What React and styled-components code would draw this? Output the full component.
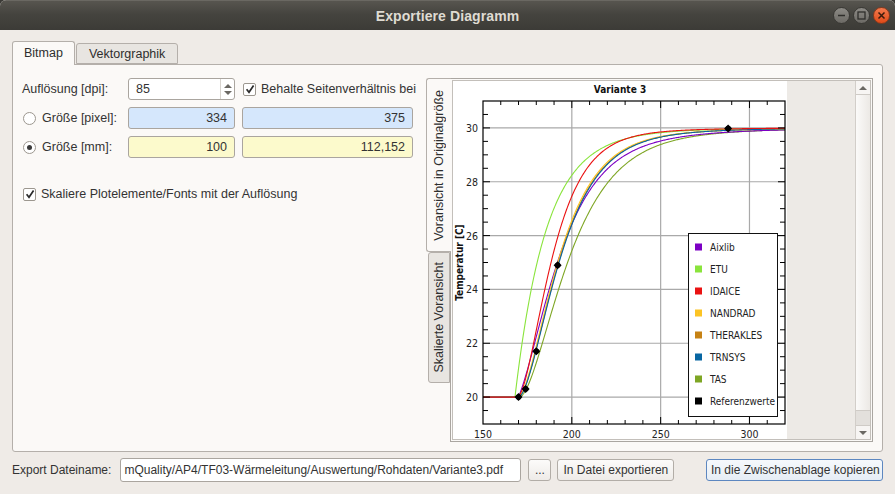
import React from 'react';
import styled, { createGlobalStyle, css } from 'styled-components';

const GlobalStyle = createGlobalStyle`
  html, body {
    margin: 0;
    padding: 0;
    background: #3b3a36;
  }
  body {
    font-family: "Liberation Sans", Arial, sans-serif;
    font-size: 12px;
    color: #333;
  }
  * { box-sizing: border-box; }
`;

// ---- chart data ----
const T_MIN = 150;
const T_MAX = 320;
const V_MIN = 19;
const V_MAX = 31;
const PL = 30;
const PR = 332;
const PT = 20;
const PB = 343;

const sx = (t) => PL + ((t - T_MIN) * (PR - PL)) / (T_MAX - T_MIN);
const sy = (v) => PT + ((V_MAX - v) * (PB - PT)) / (V_MAX - V_MIN);

const shapes = {
  first: (x) => 1 - Math.exp(-x),
  second: (x) => 1 - (1 + x) * Math.exp(-x),
  soft: (x) => 1 - (1 + 0.8 * x) * Math.exp(-x),
};

// w / tail: share and time constant of the slow part of the response
const series = [
  { name: 'Aixlib', color: '#7c00c4', t0: 170, tau: 14, shape: 'soft', w: 0.2, tail: 45 },
  { name: 'ETU', color: '#8ae43c', t0: 168, tau: 17, shape: 'first', w: 0.08, tail: 40 },
  { name: 'IDAICE', color: '#ea1212', t0: 169.5, tau: 11, shape: 'second', w: 0.1, tail: 35 },
  { name: 'NANDRAD', color: '#fcc424', t0: 170, tau: 12.8, shape: 'second', w: 0.15, tail: 40 },
  { name: 'THERAKLES', color: '#c68214', t0: 170.2, tau: 13, shape: 'second', w: 0.15, tail: 40 },
  { name: 'TRNSYS', color: '#0866a2', t0: 170.3, tau: 13.1, shape: 'second', w: 0.15, tail: 40 },
  { name: 'TAS', color: '#7ea624', t0: 171, tau: 15.5, shape: 'second', w: 0.18, tail: 45 },
];

const drawOrder = ['TAS', 'ETU', 'Aixlib', 'THERAKLES', 'NANDRAD', 'TRNSYS', 'IDAICE'];

const refPoints = [
  [170, 20],
  [174, 20.3],
  [180, 21.7],
  [192, 24.9],
  [288, 29.98],
];

function curvePath(s) {
  const f = shapes[s.shape];
  const pts = [];
  for (let t = T_MIN; t <= T_MAX; t += 0.5) {
    const d = t - s.t0;
    const v = d <= 0 ? 20 : 20 + 10 * ((1 - s.w) * f(d / s.tau) + s.w * (1 - Math.exp(-d / s.tail)));
    pts.push(`${sx(t).toFixed(2)},${sy(v).toFixed(2)}`);
  }
  return 'M' + pts.join('L');
}

const range = (a, b, step) => {
  const out = [];
  for (let v = a; v <= b + 1e-9; v += step) out.push(Math.round(v * 100) / 100);
  return out;
};

const Chart = () => {
  const xTicks = range(160, 310, 10);
  const yTicks = range(19.5, 30.5, 0.5);
  const fontNarrow = '"Liberation Sans Narrow", "DejaVu Sans Condensed", "Liberation Sans", sans-serif';

  return (
    <svg width="334" height="375" viewBox="0 0 334 375" style={{ display: 'block', background: '#fff', flex: 'none' }}>
      <defs>
        <clipPath id="plot">
          <rect x={PL} y={PT} width={PR - PL} height={PB - PT} />
        </clipPath>
      </defs>
      <text x="167" y="12" textAnchor="middle" fontFamily={fontNarrow} fontWeight="bold" fontSize="10" fill="#111">
        Variante 3
      </text>

      {/* grid */}
      {[200, 250, 300].map((t) => (
        <line key={'gx' + t} x1={sx(t)} x2={sx(t)} y1={PT} y2={PB} stroke="#a9a9a9" strokeWidth="1.2" />
      ))}
      {[20, 22, 24, 26, 28, 30].map((v) => (
        <line key={'gy' + v} x1={PL} x2={PR} y1={sy(v)} y2={sy(v)} stroke="#a9a9a9" strokeWidth="1.2" />
      ))}

      {/* curves */}
      <g clipPath="url(#plot)" fill="none" strokeWidth="1.1">
        {drawOrder.map((n) => {
          const s = series.find((x) => x.name === n);
          return <path key={n} d={curvePath(s)} stroke={s.color} />;
        })}
        {refPoints.map(([t, v]) => (
          <g key={t} transform={`translate(${sx(t)},${sy(v)})`}>
            <polygon points="0,-4 4,0 0,4 -4,0" fill="#000" />
            <circle r="2.8" fill="#000" />
          </g>
        ))}
      </g>

      {/* ticks */}
      <g stroke="#000" strokeWidth="1">
        {xTicks.map((t) => {
          const major = t % 50 === 0;
          const len = major ? 7 : 4;
          return (
            <g key={'xt' + t}>
              <line x1={sx(t)} x2={sx(t)} y1={PB} y2={PB - len} />
              <line x1={sx(t)} x2={sx(t)} y1={PT} y2={PT + len} />
            </g>
          );
        })}
        {yTicks.map((v) => {
          const major = v % 2 === 0;
          const len = major ? 7 : 5;
          return (
            <g key={'yt' + v}>
              <line x1={PL} x2={PL + len} y1={sy(v)} y2={sy(v)} />
              <line x1={PR} x2={PR - len} y1={sy(v)} y2={sy(v)} />
            </g>
          );
        })}
      </g>
      <rect x={PL} y={PT} width={PR - PL} height={PB - PT} fill="none" stroke="#000" strokeWidth="1.2" />

      {/* tick labels */}
      <g fontFamily={fontNarrow} fontSize="10.5" fill="#222">
        {[20, 22, 24, 26, 28, 30].map((v) => (
          <text key={'yl' + v} x="25" y={sy(v) + 4} textAnchor="end">
            {v}
          </text>
        ))}
        {[150, 200, 250, 300].map((t) => (
          <text key={'xl' + t} x={sx(t)} y="357" textAnchor="middle">
            {t}
          </text>
        ))}
      </g>
      <text
        transform={`translate(10,${(PT + PB) / 2}) rotate(-90)`}
        textAnchor="middle"
        fontFamily={fontNarrow}
        fontWeight="bold"
        fontSize="10"
        fill="#111"
      >
        Temperatur [C]
      </text>

      {/* legend */}
      <rect x="235.5" y="152.5" width="89" height="183" fill="#fff" stroke="#111" strokeWidth="1" />
      {[...series, { name: 'Referenzwerte', color: '#000' }].map((s, i) => (
        <g key={s.name} transform={`translate(0,${166 + i * 22})`}>
          <rect x="242" y="-3.5" width="7" height="7" fill={s.color} />
          <text x="257" y="4" fontFamily={fontNarrow} fontSize="10" fill="#222">
            {s.name}
          </text>
        </g>
      ))}
    </svg>
  );
};

// ---- small drawings ----
const CheckMark = () => (
  <svg width="10" height="10" viewBox="0 0 10 10">
    <path d="M1.6 5.2 L4 8.2 L8.6 1.4" fill="none" stroke="#2b2b2b" strokeWidth="1.7" />
  </svg>
);

// ---- window ----
const Window = styled.div`
  width: 895px;
  height: 494px;
  display: flex;
  flex-direction: column;
  background: #efebe7;
  border-radius: 6px 6px 0 0;
  overflow: hidden;
`;

const TitleBar = styled.div`
  height: 30px;
  flex: none;
  display: grid;
  grid-template-columns: 1fr auto 1fr;
  align-items: center;
  background: linear-gradient(#57554f, #45443f 45%, #3c3b37);
  border-top: 1px solid #6a6862;
`;

const Title = styled.div`
  grid-column: 2;
  font-weight: bold;
  font-size: 14px;
  color: #dfdbd2;
  letter-spacing: 0.1px;
`;

const WinButtons = styled.div`
  grid-column: 3;
  justify-self: end;
  display: flex;
  gap: 3px;
  padding-right: 5px;
`;

const WinButton = styled.div`
  width: 17px;
  height: 17px;
  border-radius: 50%;
  display: flex;
  align-items: center;
  justify-content: center;
  border: 1px solid #3a3935;
  background: linear-gradient(#8c8a85, #6c6a65);
  ${(p) =>
    p.$close &&
    css`
      background: linear-gradient(#f47a4e, #df4a18);
      border-color: #8a3a1c;
    `}
`;

const Body = styled.div`
  flex: 1;
  display: flex;
  flex-direction: column;
  padding: 11px 12px 11px 12px;
`;

const TabBar = styled.div`
  display: flex;
  align-items: flex-end;
  height: 23px;
  position: relative;
  z-index: 1;
`;

const Tab = styled.div`
  height: ${(p) => (p.$active ? '24px' : '21px')};
  margin-bottom: ${(p) => (p.$active ? '-1px' : '0')};
  padding: 0 ${(p) => (p.$active ? '11px' : '12px')};
  display: flex;
  align-items: center;
  border: 1px solid #b4afaa;
  border-bottom: ${(p) => (p.$active ? 'none' : '1px solid #b4afaa')};
  border-radius: 3px 3px 0 0;
  background: ${(p) => (p.$active ? '#fbf9f7' : '#e8e5e1')};
  color: #2e2e2e;
  font-size: 12.5px;
  padding-bottom: ${(p) => (p.$active ? '1px' : '0')};
  margin-right: 1px;
`;

const TabPane = styled.div`
  height: 388px;
  flex: none;
  display: flex;
  gap: 13px;
  padding: 13px 9px 9px 9px;
  border: 1px solid #b4afaa;
  background: #fbf9f7;
  border-radius: 0 3px 3px 3px;
`;

const FormColumn = styled.div`
  width: 391px;
  flex: none;
  display: flex;
  flex-direction: column;
`;

const FormGrid = styled.div`
  display: grid;
  grid-template-columns: 99px 107px 171px;
  grid-auto-rows: 22px;
  column-gap: 7px;
  row-gap: 7px;
  align-items: center;
`;

const Label = styled.label`
  display: flex;
  align-items: center;
  gap: ${(p) => (p.$gap ? p.$gap : 6)}px;
  font-size: ${(p) => p.$size || 12.5}px;
  color: #333;
  white-space: nowrap;
  padding-left: ${(p) => p.$indent || 0}px;
`;

const Box = styled.span`
  width: 13px;
  height: 13px;
  flex: none;
  display: flex;
  align-items: center;
  justify-content: center;
  border: 1px solid #9c978f;
  background: #fff;
  border-radius: ${(p) => (p.$round ? '50%' : '2px')};
`;

const Dot = styled.span`
  width: 5px;
  height: 5px;
  border-radius: 50%;
  background: #3a3a3a;
`;

const Field = styled.input`
  width: 100%;
  height: 22px;
  border: 1px solid #aaa59f;
  border-radius: 3px;
  padding: 0 7px;
  font-family: "Liberation Sans", Arial, sans-serif;
  font-size: 12.5px;
  color: #333;
  text-align: ${(p) => (p.$left ? 'left' : 'right')};
  background: ${(p) => (p.$tone === 'blue' ? '#d5e7fc' : p.$tone === 'yellow' ? '#fcfacc' : '#fff')};
  outline: none;
`;

const SpinBox = styled.div`
  height: 22px;
  display: flex;
  border: 1px solid #aaa59f;
  border-radius: 3px;
  background: #fff;
  overflow: hidden;
`;

const SpinInput = styled.input`
  flex: 1;
  min-width: 0;
  border: none;
  padding: 0 7px;
  font-family: "Liberation Sans", Arial, sans-serif;
  font-size: 12.5px;
  color: #333;
  outline: none;
  background: transparent;
`;

const SpinArrows = styled.div`
  width: 14px;
  flex: none;
  border-left: 1px solid #d8d4cf;
  display: flex;
  flex-direction: column;
  align-items: center;
  justify-content: center;
  gap: 3px;
`;

const Arrow = styled.span`
  width: 0;
  height: 0;
  border-left: 4px solid transparent;
  border-right: 4px solid transparent;
  ${(p) =>
    p.$down
      ? css`border-top: 4px solid #6b6863;`
      : css`border-bottom: 4px solid #6b6863;`}
`;

const ScaleRow = styled.div`
  margin-top: 29px;
  padding-left: 1px;
`;

// ---- preview ----
const PreviewTabs = styled.div`
  flex: 1;
  display: flex;
  min-width: 0;
`;

const SideTabBar = styled.div`
  width: 24px;
  flex: none;
  display: flex;
  flex-direction: column;
  position: relative;
  z-index: 1;
`;

const SideTab = styled.div`
  height: ${(p) => p.$h}px;
  width: ${(p) => (p.$active ? '25px' : '22px')};
  margin-left: ${(p) => (p.$active ? '0' : '2px')};
  border: 1px solid #b4afaa;
  border-right: ${(p) => (p.$active ? 'none' : '1px solid #b4afaa')};
  border-radius: 3px 0 0 3px;
  background: ${(p) => (p.$active ? '#fbf9f7' : '#e8e5e1')};
  display: flex;
  align-items: center;
  justify-content: center;
  font-size: 12.5px;
  color: #2e2e2e;
  white-space: nowrap;
`;

const SideTabText = styled.span`
  writing-mode: vertical-rl;
  transform: rotate(180deg);
`;

const PreviewPane = styled.div`
  flex: 1;
  min-width: 0;
  border: 1px solid #aaa6a1;
  padding: 1px;
  background: #fbf9f7;
  display: flex;
`;

const ScrollArea = styled.div`
  flex: 1;
  display: flex;
  border: 1px solid #c3bfba;
  min-width: 0;
`;

const Viewport = styled.div`
  flex: 1;
  background: #edeae6;
  overflow: hidden;
  display: flex;
  align-items: flex-start;
`;

const ScrollBar = styled.div`
  width: 15px;
  flex: none;
  display: flex;
  flex-direction: column;
  border-left: 1px solid #d2cec9;
  background: #e3e0dc;
`;

const ScrollButton = styled.div`
  height: 14px;
  flex: none;
  display: flex;
  align-items: center;
  justify-content: center;
  background: #f7f5f3;
  border-bottom: ${(p) => (p.$down ? 'none' : '1px solid #cfcbc6')};
  border-top: ${(p) => (p.$down ? '1px solid #cfcbc6' : 'none')};
`;

const ScrollHandle = styled.div`
  flex: 1;
  background: linear-gradient(to right, #fbfaf9, #ece9e5);
  border-bottom: 1px solid #cfcbc6;
  margin-bottom: 14px;
`;

// ---- bottom bar ----
const BottomBar = styled.div`
  margin-top: 6px;
  height: 24px;
  display: flex;
  align-items: center;
`;

const PathField = styled(Field)`
  width: 401px;
  height: 24px;
  margin-left: 9px;
  padding: 0 3px;
  font-size: 12px;
  overflow: hidden;
`;

const Button = styled.button`
  height: 22px;
  padding: 0 4px;
  margin-left: ${(p) => p.$ml || 0}px;
  width: ${(p) => p.$w}px;
  font-family: "Liberation Sans", Arial, sans-serif;
  font-size: 12px;
  color: #333;
  border: 1px solid #b2ada7;
  border-radius: 3px;
  background: linear-gradient(#fcfbfa, #eeebe8);
  white-space: nowrap;
  ${(p) =>
    p.$default &&
    css`
      border-color: #5d87c0;
      background: linear-gradient(#f6f9fc, #e6edf5);
    `}
`;

const Spacer = styled.div`
  flex: 1;
`;

export default function App() {
  return (
    <>
      <GlobalStyle />
      <Window>
        <TitleBar>
          <Title>Exportiere Diagramm</Title>
          <WinButtons>
            <WinButton>
              <svg width="9" height="9" viewBox="0 0 9 9">
                <line x1="1" y1="4.5" x2="8" y2="4.5" stroke="#2f2e2b" strokeWidth="1.4" />
              </svg>
            </WinButton>
            <WinButton>
              <svg width="9" height="9" viewBox="0 0 9 9">
                <rect x="1" y="1" width="7" height="7" fill="none" stroke="#2f2e2b" strokeWidth="1.3" />
              </svg>
            </WinButton>
            <WinButton $close>
              <svg width="9" height="9" viewBox="0 0 9 9">
                <path d="M1.5 1.5 L7.5 7.5 M7.5 1.5 L1.5 7.5" stroke="#3a1a0c" strokeWidth="1.5" />
              </svg>
            </WinButton>
          </WinButtons>
        </TitleBar>

        <Body>
          <TabBar>
            <Tab $active>Bitmap</Tab>
            <Tab>Vektorgraphik</Tab>
          </TabBar>

          <TabPane>
            <FormColumn>
              <FormGrid>
                <Label>Auflösung [dpi]:</Label>
                <SpinBox>
                  <SpinInput readOnly value="85" />
                  <SpinArrows>
                    <Arrow />
                    <Arrow $down />
                  </SpinArrows>
                </SpinBox>
                <Label $indent={1} $gap={5}>
                  <Box>
                    <CheckMark />
                  </Box>
                  Behalte Seitenverhältnis bei
                </Label>

                <Label $indent={1} $gap={6}>
                  <Box $round />
                  Größe [pixel]:
                </Label>
                <Field readOnly value="334" $tone="blue" />
                <Field readOnly value="375" $tone="blue" />

                <Label $indent={1} $gap={6}>
                  <Box $round>
                    <Dot />
                  </Box>
                  Größe [mm]:
                </Label>
                <Field readOnly value="100" $tone="yellow" />
                <Field readOnly value="112,152" $tone="yellow" />
              </FormGrid>

              <ScaleRow>
                <Label $gap={5}>
                  <Box>
                    <CheckMark />
                  </Box>
                  Skaliere Plotelemente/Fonts mit der Auflösung
                </Label>
              </ScaleRow>
            </FormColumn>

            <PreviewTabs>
              <SideTabBar>
                <SideTab $active $h={174}>
                  <SideTabText>Voransicht in Originalgröße</SideTabText>
                </SideTab>
                <SideTab $h={131}>
                  <SideTabText>Skalierte Voransicht</SideTabText>
                </SideTab>
              </SideTabBar>
              <PreviewPane>
                <ScrollArea>
                  <Viewport>
                    <Chart />
                  </Viewport>
                  <ScrollBar>
                    <ScrollButton>
                      <Arrow />
                    </ScrollButton>
                    <ScrollHandle />
                    <ScrollButton $down>
                      <Arrow $down />
                    </ScrollButton>
                  </ScrollBar>
                </ScrollArea>
              </PreviewPane>
            </PreviewTabs>
          </TabPane>

          <BottomBar>
            <Label $size={12}>Export Dateiname:</Label>
            <PathField readOnly $left value="mQuality/AP4/TF03-Wärmeleitung/Auswertung/Rohdaten/Variante3.pdf" />
            <Button $ml={7} $w={23}>...</Button>
            <Button $ml={6} $w={117}>In Datei exportieren</Button>
            <Spacer />
            <Button $default $w={177}>In die Zwischenablage kopieren</Button>
          </BottomBar>
        </Body>
      </Window>
    </>
  );
}
